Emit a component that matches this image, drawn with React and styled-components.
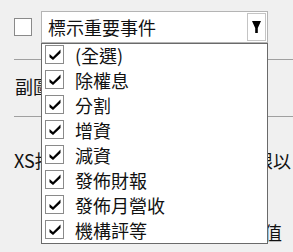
import styled, { createGlobalStyle } from "styled-components";

const items = ["(全選)", "除權息", "分割", "增資", "減資", "發佈財報", "發佈月營收", "機構評等"];

const GlobalStyle = createGlobalStyle`
  body {
    margin: 0;
    background: #f0f0f0;
    font-family: "Noto Sans CJK TC", "Noto Sans", sans-serif;
    color: #111;
  }
`;

const Page = styled.div`
  position: relative;
  width: 293px;
  height: 252px;
  overflow: hidden;
  background: #f0f0f0;
`;

const TopRow = styled.div`
  display: flex;
  align-items: center;
  gap: 9px;
  padding: 11px 0 0 14px;
  height: 32px;
`;

const Box = styled.div`
  box-sizing: border-box;
  width: ${(p) => p.size}px;
  height: ${(p) => p.size}px;
  flex: none;
  background: #fff;
  border: 1px solid #8a8a8a;
  display: flex;
  align-items: center;
  justify-content: center;
`;

const Combo = styled.div`
  box-sizing: border-box;
  width: 227px;
  height: 32px;
  background: #fff;
  border: 1px solid #b4b4b4;
  display: flex;
  align-items: center;
  justify-content: space-between;
  padding-left: 6px;
  font-size: 18px;
`;

const DropButton = styled.div`
  box-sizing: border-box;
  width: 19px;
  height: 28px;
  margin-right: 1px;
  border: 1px solid #c4c4c4;
  background: #fff;
  display: flex;
  align-items: center;
  justify-content: center;
`;

const Separator = styled.div`
  margin: ${(p) => p.top}px 0 0 14px;
  border-top: 1px solid #a0a0a0;
`;

const Label = styled.div`
  font-size: 18px;
  line-height: 24px;
  padding-left: 15px;
  margin-top: ${(p) => p.top}px;
  white-space: nowrap;
`;

const SplitRow = styled.div`
  display: flex;
  justify-content: space-between;
  font-size: 18px;
  line-height: 24px;
  padding: 0 ${(p) => p.right}px 0 14px;
  margin-top: ${(p) => p.top}px;
  white-space: nowrap;
`;

const List = styled.div`
  position: absolute;
  left: 41px;
  top: 43px;
  box-sizing: border-box;
  width: 227px;
  height: 201px;
  background: #fff;
  border: 1px solid #6a6a6a;
  padding: 1px 0 0 3px;
`;

const Item = styled.div`
  display: flex;
  align-items: flex-start;
  gap: 11px;
  height: 25px;
  font-size: 18px;
`;

const ItemText = styled.span`
  line-height: 20px;
`;

const Check = () => (
  <svg width="12" height="11" viewBox="0 0 12 11">
    <path d="M0.5 5 L4 8 L11.5 0.5 L11.5 4 L4 11 L0.5 8.2 Z" fill="#000" />
  </svg>
);

const Arrow = () => (
  <svg width="9" height="12" viewBox="0 0 9 12">
    <path d="M0 0 H9 L5.8 7 V12 H3.2 V7 Z" fill="#000" />
  </svg>
);

export default function App() {
  return (
    <Page>
      <GlobalStyle />
      <TopRow>
        <Box size={18} />
        <Combo>
          標示重要事件
          <DropButton>
            <Arrow />
          </DropButton>
        </Combo>
      </TopRow>
      <Separator top={16} />
      <Label top={14}>副圖</Label>
      <Separator top={18} />
      <SplitRow top={31} right={2}>
        <span>XS指</span>
        <span>限以</span>
      </SplitRow>
      <SplitRow top={48} right={11}>
        <span />
        <span>值</span>
      </SplitRow>
      <List>
        {items.map((t) => (
          <Item key={t}>
            <Box size={19}>
              <Check />
            </Box>
            <ItemText>{t}</ItemText>
          </Item>
        ))}
      </List>
    </Page>
  );
}
